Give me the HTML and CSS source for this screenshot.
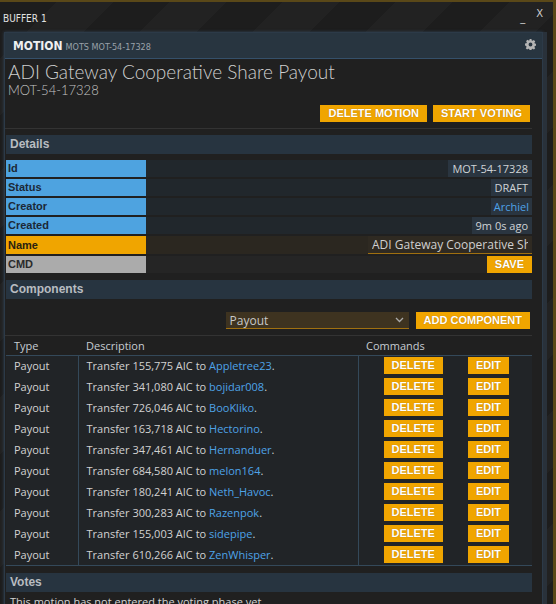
FILE: index.html
```html
<html>
  <head>
    <title>Buffer 1 - Motion</title>
    <meta charset="utf-8" />
    <link rel="stylesheet" href="styles.css">
  </head>
  <body>
    <div class="window">
      <div class="titlebar">
        <span class="buffer-name">BUFFER 1</span>
        <span class="win-ctrl">
          <span class="min">_</span>
          <span class="close">X</span>
        </span>
      </div>

      <div class="frame">
        <div class="panel">
          <div class="panel-head">
            <span class="panel-title">MOTION</span>
            <span class="panel-sub">MOTS MOT-54-17328</span>
            <svg class="gear" width="11" height="11" viewBox="0 0 16 16">
              <path fill="#b4b4b4" d="M6.6 0h2.8l.4 2.1 1.3.6 1.8-1.2 2 2-1.2 1.8.6 1.3 2.1.4v2.8l-2.1.4-.6 1.3 1.2 1.8-2 2-1.8-1.2-1.3.6-.4 2.1H6.6l-.4-2.1-1.3-.6-1.8 1.2-2-2 1.2-1.8-.6-1.3L0 9.4V6.6l2.1-.4.6-1.3-1.2-1.8 2-2 1.8 1.2 1.3-.6zM8 5.2A2.8 2.8 0 1 0 8 10.8 2.8 2.8 0 1 0 8 5.2z"/>
            </svg>
          </div>

          <div class="panel-body">
            <div class="motion-title">ADI Gateway Cooperative Share Payout</div>
            <div class="motion-id">MOT-54-17328</div>

            <div class="actions">
              <button class="btn">DELETE MOTION</button>
              <button class="btn">START VOTING</button>
            </div>

            <div class="section">Details</div>
            <div class="details">
              <div class="drow">
                <div class="dlabel">Id</div>
                <div class="dval"><span class="pill">MOT-54-17328</span></div>
              </div>
              <div class="drow">
                <div class="dlabel">Status</div>
                <div class="dval"><span class="pill">DRAFT</span></div>
              </div>
              <div class="drow">
                <div class="dlabel">Creator</div>
                <div class="dval"><span class="pill link">Archiel</span></div>
              </div>
              <div class="drow">
                <div class="dlabel">Created</div>
                <div class="dval"><span class="pill">9m 0s ago</span></div>
              </div>
              <div class="drow name-row">
                <div class="dlabel orange">Name</div>
                <div class="dval brown"><input class="name-input" type="text" value="ADI Gateway Cooperative Share Payout"></div>
              </div>
              <div class="drow">
                <div class="dlabel grey">CMD</div>
                <div class="dval dark"><button class="btn">SAVE</button></div>
              </div>
            </div>

            <div class="section">Components</div>
            <div class="add-row">
              <div class="select">
                <span>Payout</span>
                <svg width="9" height="6" viewBox="0 0 9 6"><path d="M1 1l3.5 3.5L8 1" stroke="#aaa" stroke-width="1.3" fill="none"/></svg>
              </div>
              <button class="btn">ADD COMPONENT</button>
            </div>

            <table class="comps">
              <thead>
                <tr><th class="c-type">Type</th><th class="c-desc">Description</th><th class="c-cmd">Commands</th></tr>
              </thead>
              <tbody>
                <tr><td>Payout</td><td>Transfer 155,775 AIC to <a>Appletree23</a>.</td><td><button class="btn">DELETE</button><button class="btn">EDIT</button></td></tr>
                <tr><td>Payout</td><td>Transfer 341,080 AIC to <a>bojidar008</a>.</td><td><button class="btn">DELETE</button><button class="btn">EDIT</button></td></tr>
                <tr><td>Payout</td><td>Transfer 726,046 AIC to <a>BooKliko</a>.</td><td><button class="btn">DELETE</button><button class="btn">EDIT</button></td></tr>
                <tr><td>Payout</td><td>Transfer 163,718 AIC to <a>Hectorino</a>.</td><td><button class="btn">DELETE</button><button class="btn">EDIT</button></td></tr>
                <tr><td>Payout</td><td>Transfer 347,461 AIC to <a>Hernanduer</a>.</td><td><button class="btn">DELETE</button><button class="btn">EDIT</button></td></tr>
                <tr><td>Payout</td><td>Transfer 684,580 AIC to <a>melon164</a>.</td><td><button class="btn">DELETE</button><button class="btn">EDIT</button></td></tr>
                <tr><td>Payout</td><td>Transfer 180,241 AIC to <a>Neth_Havoc</a>.</td><td><button class="btn">DELETE</button><button class="btn">EDIT</button></td></tr>
                <tr><td>Payout</td><td>Transfer 300,283 AIC to <a>Razenpok</a>.</td><td><button class="btn">DELETE</button><button class="btn">EDIT</button></td></tr>
                <tr><td>Payout</td><td>Transfer 155,003 AIC to <a>sidepipe</a>.</td><td><button class="btn">DELETE</button><button class="btn">EDIT</button></td></tr>
                <tr><td>Payout</td><td>Transfer 610,266 AIC to <a>ZenWhisper</a>.</td><td><button class="btn">DELETE</button><button class="btn">EDIT</button></td></tr>
              </tbody>
            </table>

            <div class="section votes">Votes</div>
            <div class="note">This motion has not entered the voting phase yet.</div>
          </div>
        </div>
        <div class="scroll-strip"></div>
      </div>
    </div>
  </body>
</html>
```

FILE: styles.css
```css
html, body {
  margin: 0px;
  width: 100%;
  height: 100%;
  overflow: hidden;
  background: #1c1c1c;
}

.window {
  box-sizing: border-box;
  width: 556px;
  height: 604px;
  border-top: 2px solid #5a4818;
  border-right: 3px solid #5a4818;
  background: repeating-linear-gradient(135deg, #1d1d1d 0px, #1d1d1d 40px, #222222 40px, #222222 80px);
  font-family: "Open Sans", "Noto Sans", sans-serif;
  color: #d2d2d2;
  overflow: hidden;
}

.titlebar {
  height: 30px;
  display: flex;
  align-items: center;
  justify-content: space-between;
  padding: 0 10px 0 3px;
}

.buffer-name {
  font-family: "DejaVu Sans Condensed", "Liberation Sans Narrow", "Liberation Sans", sans-serif;
  font-size: 10px;
  color: #e2e2e2;
  margin-top: 2px;
}

.win-ctrl {
  display: flex;
  align-items: flex-start;
  height: 20px;
  gap: 11px;
  font-family: "DejaVu Sans", sans-serif;
  font-size: 10px;
  line-height: 10px;
  color: #cfcfcf;
}

.win-ctrl .min {
  margin-top: 6px;
}

.win-ctrl .close {
  margin-top: 2px;
}

.frame {
  display: flex;
  padding-left: 4px;
}

.panel {
  box-sizing: border-box;
  width: 539px;
  height: 600px;
  background: #202020;
  border: 1px solid #2c3a48;
  border-bottom: none;
  box-shadow: 0 0 3px rgba(70, 110, 150, 0.45);
}

.scroll-strip {
  width: 4px;
  height: 600px;
  background: #29313a;
}

.panel-head {
  height: 25px;
  display: flex;
  align-items: center;
  padding: 0 6px 0 8px;
  background: #283540;
  border-bottom: 1px solid #35506a;
}

.panel-title {
  font-family: "DejaVu Sans Condensed", "Liberation Sans", sans-serif;
  font-weight: bold;
  font-size: 12px;
  color: #f0f0f0;
}

.panel-sub {
  font-family: "DejaVu Sans Condensed", "Liberation Sans", sans-serif;
  font-size: 9px;
  color: #9aa2aa;
  margin: 2px 0 0 3px;
  flex: 1;
}

.gear {
  margin-top: -3px;
}

.panel-body {
  padding: 0 10px 0 0;
}

.motion-title {
  font-family: "Lato", "Open Sans", sans-serif;
  font-weight: 300;
  font-size: 19px;
  color: #cfcfcf;
  padding: 2px 0 0 3px;
  line-height: 22px;
}

.motion-id {
  font-family: "Lato", "Open Sans", sans-serif;
  font-weight: 300;
  font-size: 13px;
  color: #c4c4c4;
  padding-left: 3px;
  line-height: 14px;
}

.actions {
  display: flex;
  justify-content: flex-end;
  gap: 6px;
  padding: 8px 2px 6px 0;
  border-bottom: 1px solid #333;
  margin-bottom: 6px;
}

.btn {
  height: 17px;
  padding: 0 8px;
  border: none;
  background: #f0a500;
  color: #ffffff;
  font-family: "Liberation Sans", Arial, sans-serif;
  font-weight: bold;
  font-size: 11px;
  line-height: 17px;
  text-shadow: 0 0 1px rgba(120, 70, 0, 0.6);
  cursor: pointer;
}

.section {
  height: 19px;
  line-height: 19px;
  background: #273440;
  padding-left: 4px;
  margin-left: 1px;
  font-family: "Liberation Sans", Arial, sans-serif;
  font-weight: bold;
  font-size: 12px;
  color: #b8bcc0;
}

.details {
  padding: 6px 0 5px 1px;
}

.drow {
  display: flex;
  height: 17px;
  margin-bottom: 2px;
}

.drow.name-row {
  height: 18px;
}

.dlabel {
  box-sizing: border-box;
  width: 140px;
  padding-left: 2px;
  background: #4ea3e0;
  color: #1c2836;
  font-family: "Liberation Sans", Arial, sans-serif;
  font-weight: bold;
  font-size: 11px;
  line-height: 17px;
}

.dlabel.orange {
  background: #f0a500;
  color: #2a2210;
  line-height: 18px;
}

.dlabel.grey {
  background: #ababab;
  color: #2a2a2a;
}

.dval {
  flex: 1;
  display: flex;
  justify-content: flex-end;
  background: #21272c;
  font-size: 11px;
  line-height: 17px;
}

.dval.brown {
  background: #2b2720;
}

.dval.dark {
  background: #252525;
}

.pill {
  background: #2a3540;
  color: #cfd3d6;
  padding: 0 4px;
}

.pill.link {
  color: #4ea3e8;
  padding: 0 3px;
}

.name-input {
  box-sizing: border-box;
  width: 164px;
  height: 18px;
  border: none;
  border-bottom: 1px solid #a07010;
  background: #2f2a22;
  color: #cfcfcf;
  font-family: "Open Sans", sans-serif;
  font-size: 12px;
  padding: 0 4px;
  outline: none;
}

.add-row {
  display: flex;
  justify-content: flex-end;
  gap: 7px;
  padding: 13px 2px 6px 0;
  border-bottom: 1px solid #333;
}

.select {
  box-sizing: border-box;
  width: 183px;
  height: 17px;
  display: flex;
  align-items: center;
  justify-content: space-between;
  padding: 0 5px 0 4px;
  background: #3e3320;
  border-bottom: 1px solid #a07010;
  color: #c8c8c8;
  font-size: 12px;
}

.comps {
  width: calc(100% - 1px);
  border-collapse: collapse;
  margin-left: 1px;
  font-size: 11px;
}

.comps th {
  text-align: left;
  font-weight: normal;
  color: #c6ccd2;
  height: 19px;
  padding: 0 0 0 8px;
  border-bottom: 1px solid #34495a;
}

.c-type {
  width: 64px;
}

.c-desc {
  width: 272px;
}

.comps td {
  height: 21px;
  padding: 0 0 0 8px;
  color: #d2d2d2;
  background: #212427;
}

.comps td + td {
  border-left: 1px solid #34495a;
}

.comps tbody tr:last-child td {
  border-bottom: 1px solid #34495a;
}

.comps td a {
  color: #4ea3e8;
}

.comps td .btn {
  margin-left: 17px;
  vertical-align: middle;
}

.comps td .btn + .btn {
  margin-left: 25px;
}

.votes {
  margin-top: 7px;
}

.note {
  padding: 2px 0 0 5px;
  font-size: 11px;
  color: #d2d2d2;
}
```
